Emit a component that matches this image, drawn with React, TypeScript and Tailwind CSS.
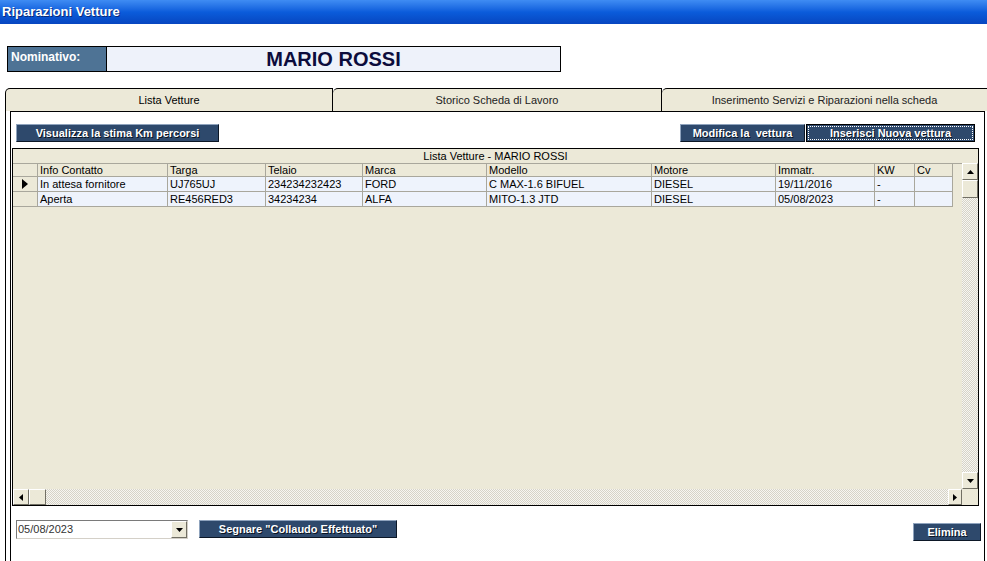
import React from "react";

const font = "font-['Liberation_Sans',Arial,sans-serif]";

const columns: { label: string; w: string }[] = [
  { label: "Info Contatto", w: "w-[130px]" },
  { label: "Targa", w: "w-[98px]" },
  { label: "Telaio", w: "w-[97px]" },
  { label: "Marca", w: "w-[124px]" },
  { label: "Modello", w: "w-[165px]" },
  { label: "Motore", w: "w-[124px]" },
  { label: "Immatr.", w: "w-[99px]" },
  { label: "KW", w: "w-[40px]" },
  { label: "Cv", w: "w-[38px]" },
];

const rows: string[][] = [
  ["In attesa fornitore", "UJ765UJ", "234234232423", "FORD", "C MAX-1.6 BIFUEL", "DIESEL", "19/11/2016", "-", ""],
  ["Aperta", "RE456RED3", "34234234", "ALFA", "MITO-1.3 JTD", "DIESEL", "05/08/2023", "-", ""],
];

const NavyButton: React.FC<{ label: string; className?: string; focused?: boolean }> = ({
  label,
  className = "",
  focused,
}) => {
  if (focused) {
    return (
      <div className={`flex border border-black bg-[#2e496c] p-[1px] ${className}`}>
        <div className="flex flex-1 items-center justify-center border border-dotted border-white text-[11px] font-bold text-white [text-shadow:1px_1px_0_#0a1322]">
          {label}
        </div>
      </div>
    );
  }
  return (
    <div
      className={`flex items-center justify-center border border-t-[#8fa3bd] border-l-[#8fa3bd] border-r-[#0c1726] border-b-[#0c1726] bg-[#2e496c] text-[11px] font-bold text-white [text-shadow:1px_1px_0_#0a1322] ${className}`}
    >
      {label}
    </div>
  );
};

const Bevel: React.FC<{ className?: string; children?: React.ReactNode }> = ({ className = "", children }) => (
  <div
    className={`flex items-center justify-center border border-t-white border-l-white border-r-[#716f64] border-b-[#716f64] bg-[#ece9d8] ${className}`}
  >
    {children}
  </div>
);

const Arrow: React.FC<{ dir: "up" | "down" | "left" | "right" }> = ({ dir }) => {
  const pts = {
    up: "0,4 7,4 3.5,0",
    down: "0,0 7,0 3.5,4",
    left: "4,0 4,7 0,3.5",
    right: "0,0 0,7 4,3.5",
  }[dir];
  const vertical = dir === "up" || dir === "down";
  return (
    <svg width={vertical ? 7 : 4} height={vertical ? 4 : 7} viewBox={vertical ? "0 0 7 4" : "0 0 4 7"}>
      <polygon points={pts} fill="#000" />
    </svg>
  );
};

const checker = "bg-[repeating-conic-gradient(#d6d3c8_0_25%,#f7f6f1_0_50%)] bg-[length:2px_2px]";

export default function App() {
  return (
    <div className={`flex h-[561px] w-[987px] flex-col overflow-hidden bg-white ${font}`}>
      {/* title bar */}
      <div className="flex h-[24px] items-center bg-linear-to-b from-[#3f8cf3] via-[#0b5cdb] to-[#0746c0] pl-[2px] text-[13px] font-bold text-white [text-shadow:1px_1px_0_#0a2a78]">
        Riparazioni Vetture
      </div>

      {/* nominativo */}
      <div className="mt-[22px] ml-[7px] flex h-[26px] w-[554px] border border-black">
        <div className="w-[99px] border-r border-black bg-[#4e7395] pt-[1px] pl-[3px] text-[12px] font-bold text-white">
          Nominativo:
        </div>
        <div className="flex flex-1 items-center justify-center bg-[#eef2fa] text-[20px] font-bold text-[#0c0c3c]">
          MARIO ROSSI
        </div>
      </div>

      {/* tabs */}
      <div className="mt-[16px] ml-[5px] flex h-[23px]">
        <div className="flex w-[328px] items-center justify-center rounded-tl-[5px] border-t border-l border-r border-black bg-[#ece9d8] text-[11px] text-black">
          Lista Vetture
        </div>
        <div className="flex w-[329px] items-center justify-center rounded-tl-[5px] border-t border-r border-black bg-[#ece9d8] text-[11px] text-[#222]">
          Storico Scheda di Lavoro
        </div>
        <div className="flex flex-1 items-center justify-center rounded-tl-[5px] border-t border-black bg-[#ece9d8] text-[11px] text-[#222]">
          Inserimento Servizi e Riparazioni nella scheda
        </div>
      </div>

      {/* panel */}
      <div className="ml-[5px] flex flex-1 border-l border-black pl-[4px]">
        <div className="mr-[2px] flex flex-1 flex-col border-t border-l border-r border-black bg-white">
          <div className="mt-[12px] flex h-[18px]">
            <NavyButton label="Visualizza la stima Km percorsi" className="ml-[5px] w-[203px]" />
            <div className="mr-[9px] ml-auto flex gap-[1px]">
              <NavyButton label="Modifica la  vettura" className="w-[125px] whitespace-pre" />
              <NavyButton label="Inserisci Nuova vettura" className="w-[169px]" focused />
            </div>
          </div>

          {/* grid */}
          <div className="mt-[6px] ml-[1px] flex h-[358px] w-[967px] flex-col border border-black bg-[#ece9d8] text-[11px] text-black">
            <div className="flex h-[14px] items-center justify-center">Lista Vetture - MARIO ROSSI</div>
            <div className="flex h-[326px]">
              <div className="flex-1">
                <div className="flex h-[14px] border-t border-[#a9a79c]">
                  <div className="w-[25px] border-r border-b border-[#a9a79c]" />
                  {columns.map((c) => (
                    <div
                      key={c.label}
                      className={`${c.w} flex items-center border-r border-b border-[#a9a79c] pl-[2px]`}
                    >
                      {c.label}
                    </div>
                  ))}
                </div>
                {rows.map((r, i) => (
                  <div key={i} className="flex h-[15px]">
                    <div className="flex w-[25px] items-center justify-center border-r border-b border-[#a9a79c]">
                      {i === 0 && (
                        <svg width="6" height="10" viewBox="0 0 6 10">
                          <polygon points="0,0 0,10 6,5" fill="#000" />
                        </svg>
                      )}
                    </div>
                    {r.map((cell, j) => (
                      <div
                        key={j}
                        className={`${columns[j].w} flex items-center border-r border-b border-[#a9a79c] bg-[#eef3fc] pl-[2px]`}
                      >
                        {cell}
                      </div>
                    ))}
                  </div>
                ))}
              </div>
              {/* vertical scrollbar */}
              <div className="flex w-[16px] flex-col">
                <Bevel className="h-[17px]">
                  <Arrow dir="up" />
                </Bevel>
                <Bevel className="h-[18px]" />
                <div className={`flex-1 ${checker}`} />
                <Bevel className="h-[17px]">
                  <Arrow dir="down" />
                </Bevel>
              </div>
            </div>
            {/* horizontal scrollbar */}
            <div className="flex h-[16px]">
              <Bevel className="w-[16px]">
                <Arrow dir="left" />
              </Bevel>
              <Bevel className="w-[17px]" />
              <div className={`flex-1 ${checker}`} />
              <Bevel className="w-[14px]">
                <Arrow dir="right" />
              </Bevel>
              <div className="w-[16px] bg-[#ece9d8]" />
            </div>
          </div>

          {/* bottom row */}
          <div className="mt-[14px] flex items-start">
            <div className="ml-[5px] flex h-[19px] w-[172px] border border-t-[#7a7a7a] border-l-[#7a7a7a] border-r-[#d4d0c8] border-b-[#d4d0c8] bg-white">
              <div className="flex flex-1 items-center pl-[1px] text-[11px] text-[#333]">05/08/2023</div>
              <Bevel className="w-[16px]">
                <Arrow dir="down" />
              </Bevel>
            </div>
            <NavyButton label={'Segnare "Collaudo Effettuato"'} className="ml-[11px] h-[18px] w-[198px]" />
            <NavyButton label="Elimina" className="mt-[3px] mr-[3px] ml-auto h-[18px] w-[68px]" />
          </div>
        </div>
      </div>
    </div>
  );
}
